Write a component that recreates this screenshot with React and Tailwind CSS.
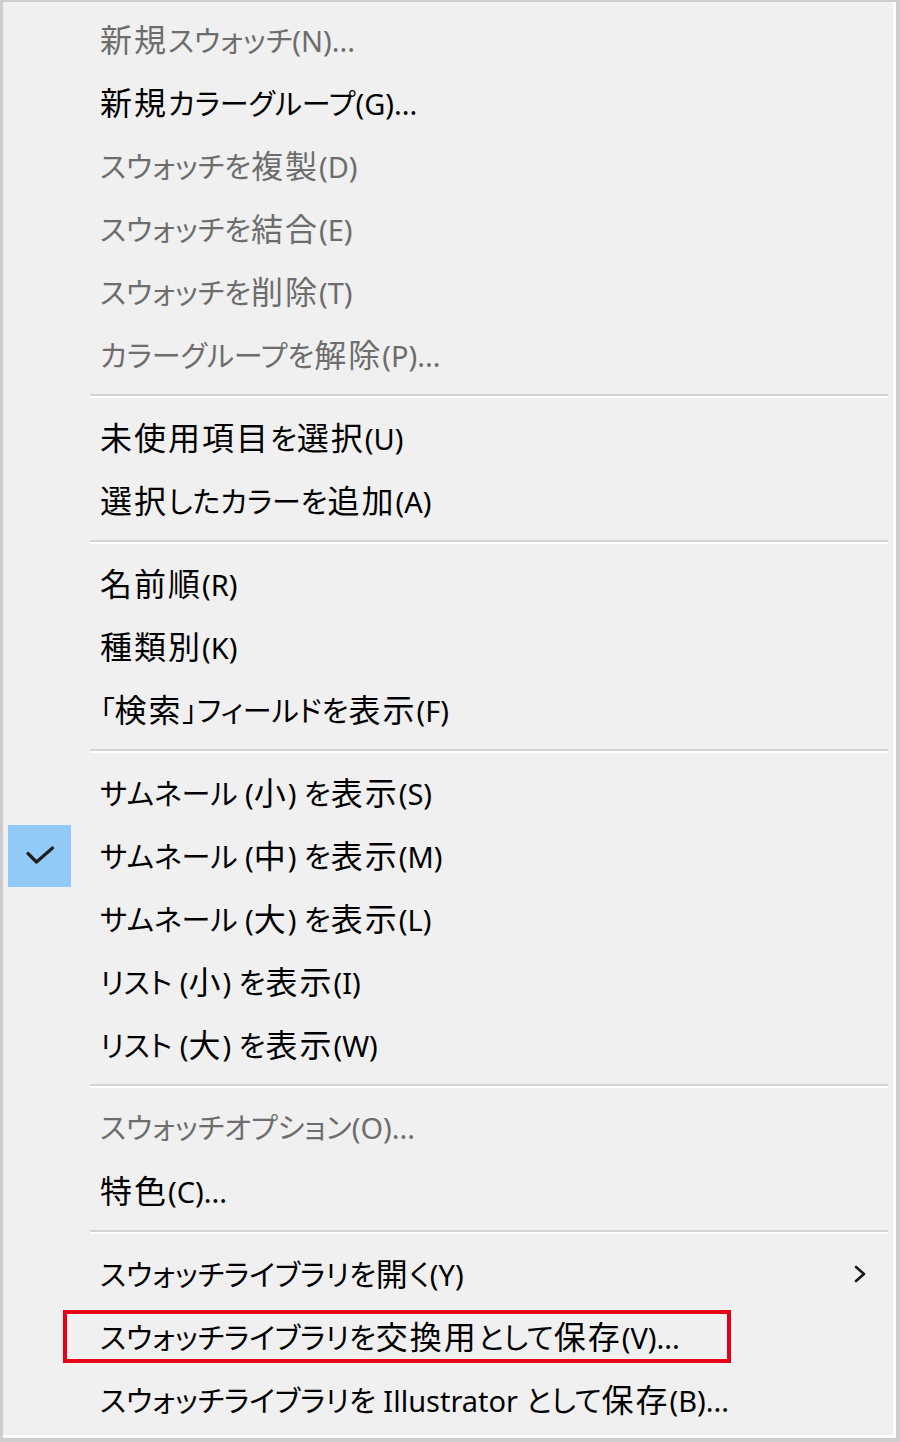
import React from 'react';

const groups = [
  [
    { label: '新規スウォッチ(N)...', disabled: true },
    { label: '新規カラーグループ(G)...' },
    { label: 'スウォッチを複製(D)', disabled: true },
    { label: 'スウォッチを結合(E)', disabled: true },
    { label: 'スウォッチを削除(T)', disabled: true },
    { label: 'カラーグループを解除(P)...', disabled: true },
  ],
  [
    { label: '未使用項目を選択(U)' },
    { label: '選択したカラーを追加(A)' },
  ],
  [
    { label: '名前順(R)' },
    { label: '種類別(K)' },
    { label: '「検索」フィールドを表示(F)' },
  ],
  [
    { label: 'サムネール (小) を表示(S)' },
    { label: 'サムネール (中) を表示(M)', checked: true },
    { label: 'サムネール (大) を表示(L)' },
    { label: 'リスト (小) を表示(I)' },
    { label: 'リスト (大) を表示(W)' },
  ],
  [
    { label: 'スウォッチオプション(O)...', disabled: true },
    { label: '特色(C)...' },
  ],
  [
    { label: 'スウォッチライブラリを開く(Y)', submenu: true },
    { label: 'スウォッチライブラリを交換用として保存(V)...', highlight: true },
    { label: 'スウォッチライブラリを Illustrator として保存(B)...' },
  ],
];

const Label = ({ text }) =>
  text.split(/([\u4e00-\u9fff]+)/).map((part, i) =>
    /[\u4e00-\u9fff]/.test(part) ? (
      <span key={i} className="text-[32px] tracking-[2px]">{part}</span>
    ) : (
      <span key={i}>{part}</span>
    )
  );

const MenuItem = ({ label, disabled, checked, submenu, highlight }) => (
  <div className="relative flex items-center h-[63px]">
    <div className="w-[97px] h-full flex items-center pl-[5px]">
      {checked && (
        <div className="w-[63px] h-[62px] bg-[#91c9f7] flex items-center justify-center">
          <svg width="30" height="24" viewBox="0 0 30 24" fill="none">
            <path d="M3 9.5 L11.5 18 L27.5 4" stroke="#1f1f1f" strokeWidth="3.2" strokeLinecap="round" strokeLinejoin="round" />
          </svg>
        </div>
      )}
    </div>
    <span
      className={`text-[29px] leading-none whitespace-nowrap [font-feature-settings:'palt'] ${
        disabled ? 'text-[#6d6d6d]' : 'text-black'
      }`}
    >
      <Label text={label} />
    </span>
    {submenu && (
      <svg className="absolute left-[849px] top-[23px]" width="16" height="18" viewBox="0 0 16 18" fill="none">
        <path d="M4 2 L12 9 L4 16" stroke="#1a1a1a" strokeWidth="2.6" strokeLinecap="round" strokeLinejoin="round" />
      </svg>
    )}
    {highlight && (
      <div className="absolute left-[60px] w-[668px] top-[5px] bottom-[5px] border-[4px] border-[#e5001a]" />
    )}
  </div>
);

const Separator = () => (
  <div className="h-[20px] flex items-center pl-[87px] pr-[5px]">
    <div className="w-full border-t-2 border-[#d3d3d3] border-b-2 border-b-white" />
  </div>
);

export default function App() {
  return (
    <div className="w-[900px] h-[1442px] bg-[#f0f0f0] border-l-[3px] border-t-[2px] border-r-[4px] border-b-[4px] border-[#cdcdcd] font-['Noto_Sans','Noto_Sans_CJK_JP',sans-serif]">
      <div className="h-full border-r-[3px] border-b-[3px] border-white pt-[6px]">
        {groups.map((items, gi) => (
          <React.Fragment key={gi}>
            {gi > 0 && <Separator />}
            {items.map((item) => (
              <MenuItem key={item.label} {...item} />
            ))}
          </React.Fragment>
        ))}
      </div>
    </div>
  );
}
